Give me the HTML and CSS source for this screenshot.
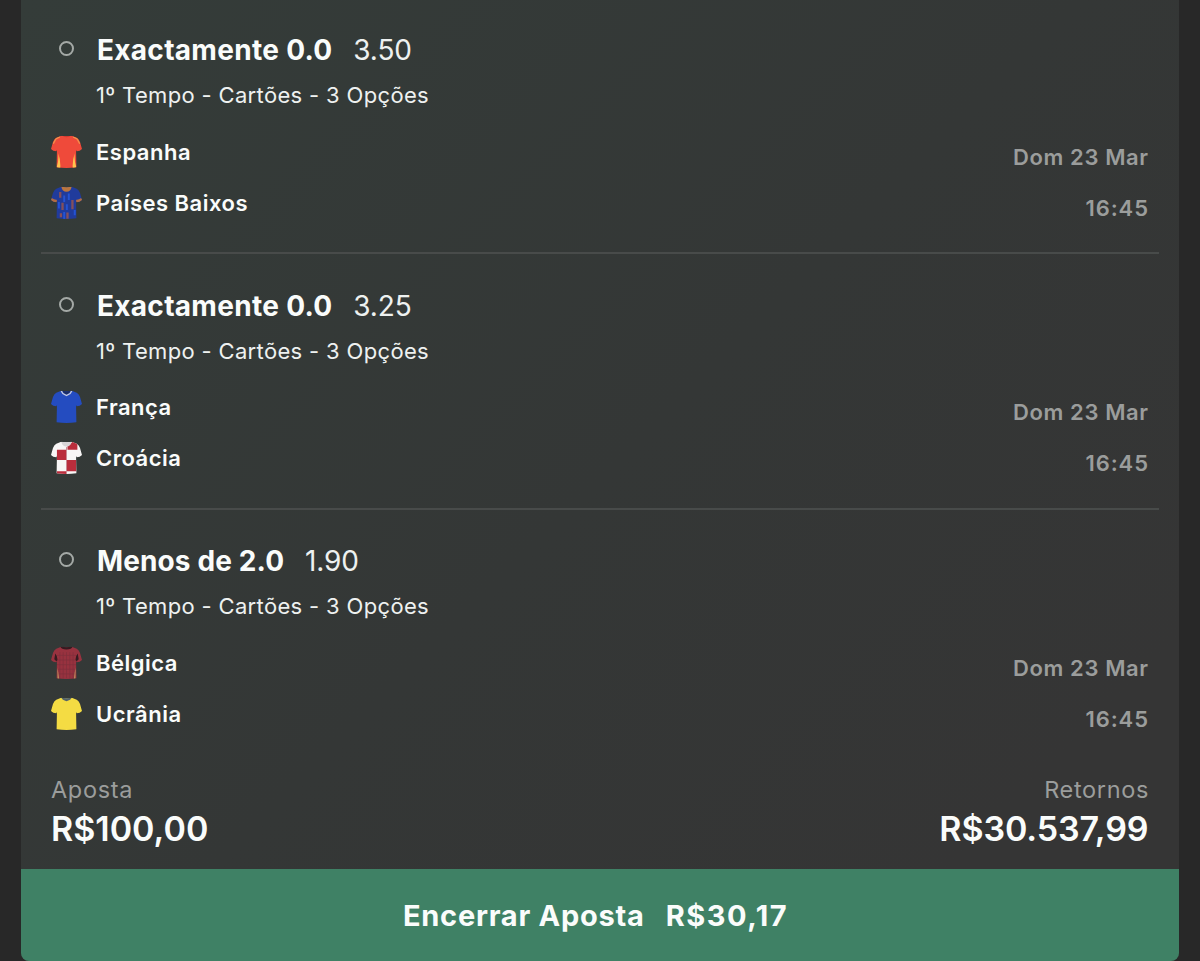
FILE: index.html
```
<!DOCTYPE html>
<html lang="pt">
<head>
<meta charset="utf-8">
<title>Aposta</title>
<link rel="stylesheet" href="styles.css">
</head>
<body>
<svg class="defs" width="0" height="0">
  <defs>
    <path id="shirt" d="M31 2Q47 5 63 2L78 8Q85 12 88 21L94 42Q88 49 78 49L76 45L77 97Q47 102 17 97L18 45L16 49Q6 49 0 42L6 21Q9 12 16 8Z"/>
    <clipPath id="shirt-clip"><use href="#shirt"/></clipPath>
  </defs>
</svg>
<main class="card">
  <div class="legs">
    <section class="leg">
      <div class="pick"><i class="dot"></i><b class="name">Exactamente 0.0</b><span class="odds">3.50</span></div>
      <div class="market">1º Tempo - Cartões - 3 Opções</div>
      <div class="match">
        <div class="teams">
          <div class="team"><svg class="kit" viewBox="0 0 94 102"><g clip-path="url(#shirt-clip)"><path fill="#ef4a3a" d="M0 0h94v102H0z"/><path fill="#d23a30" d="M33 1h28q-14 11-28 0z"/><path stroke="#f3914a" stroke-width="4" fill="none" d="M27 5L15 11L7 26M67 5l12 6l8 15"/><path fill="#ffc34d" d="M17 98Q24 80 22 55Q30 78 28 101zM77 98Q70 80 72 55Q64 78 66 101z"/></g></svg><span>Espanha</span></div>
          <div class="team"><svg class="kit" viewBox="0 0 94 102"><g clip-path="url(#shirt-clip)"><path fill="#203b9c" d="M0 0h94v102H0z"/><path fill="#b87540" d="M31 0h32q-3 17-16 17T31 0z"/><path stroke="#b46c42" stroke-width="8" fill="none" d="M0 39q9 7 18 6M94 39q-9 7-18 6"/><path stroke="#85505a" stroke-width="7" fill="none" d="M28 18v17M35 50v22M65 42v28M30 82v12M50 80v19"/><path stroke="#2453d4" stroke-width="6" fill="none" d="M40 28v20M54 22v20M48 55v17M24 48v20M72 72v16M40 78v22"/></g></svg><span>Países Baixos</span></div>
        </div>
        <div class="when"><span>Dom 23 Mar</span><span class="time">16:45</span></div>
      </div>
    </section>
    <section class="leg">
      <div class="pick"><i class="dot"></i><b class="name">Exactamente 0.0</b><span class="odds">3.25</span></div>
      <div class="market">1º Tempo - Cartões - 3 Opções</div>
      <div class="match">
        <div class="teams">
          <div class="team"><svg class="kit" viewBox="0 0 94 102"><g clip-path="url(#shirt-clip)"><path fill="#244cc0" d="M0 0h94v102H0z"/><path fill="#1b2d68" d="M34 0h26l-5 10l-8 4l-8-4z"/><path stroke="#c5c9df" stroke-width="4" fill="none" d="M31 2l5 8l11 6l11-6l5-8"/></g></svg><span>França</span></div>
          <div class="team"><svg class="kit" viewBox="0 0 94 102"><g clip-path="url(#shirt-clip)"><path fill="#f8f6f6" d="M0 0h94v102H0z"/><path fill="#ba2d3c" d="M50 14L68 0h12v26H50zM18 26h28v31H18zM46 57h31v34H46zM18 91h28v11H18z"/><path fill="#d8d5d7" d="M31 1h32q-3 15-16 15T31 1z"/><path stroke="#c98b94" stroke-width="3" d="M47 18v82"/></g></svg><span>Croácia</span></div>
        </div>
        <div class="when"><span>Dom 23 Mar</span><span class="time">16:45</span></div>
      </div>
    </section>
    <section class="leg">
      <div class="pick"><i class="dot"></i><b class="name name-tight">Menos de 2.0</b><span class="odds">1.90</span></div>
      <div class="market">1º Tempo - Cartões - 3 Opções</div>
      <div class="match">
        <div class="teams">
          <div class="team"><svg class="kit" viewBox="0 0 94 102"><g clip-path="url(#shirt-clip)"><path fill="#98323f" d="M0 0h94v102H0z"/><path fill="#351b20" d="M28 0h38q-3 10-19 10T28 0zM13 22q6 6 7 20l-4 4l-6-6zM81 22q-6 6-7 20l4 4l6-6z"/><path stroke="#7e303b" stroke-width="2" fill="none" d="M27 18v80M37 18v80M47 18v80M57 18v80M67 18v80M18 28h58M18 42h58M18 56h58M18 70h58M18 84h58"/><path fill="#b88a5b" d="M19 65q4 16 6 36h-5zM75 65q-4 16-6 36h5z"/></g></svg><span>Bélgica</span></div>
          <div class="team"><svg class="kit" viewBox="0 0 94 102"><g clip-path="url(#shirt-clip)"><path fill="#f4dc43" d="M0 0h94v102H0z"/><path fill="#53636b" d="M30 0h34l-6 8l-11 4l-11-4z"/></g></svg><span>Ucrânia</span></div>
        </div>
        <div class="when"><span>Dom 23 Mar</span><span class="time">16:45</span></div>
      </div>
    </section>
  </div>
  <div class="totals">
    <div class="total"><span class="label">Aposta</span><span class="amount">R$100,00</span></div>
    <div class="total total-end"><span class="label">Retornos</span><span class="amount">R$30.537,99</span></div>
  </div>
  <button class="cashout"><span>Encerrar Aposta</span><span class="cashout-value">R$30,17</span></button>
</main>
</body>
</html>
```
FILE: styles.css
```
* { box-sizing: border-box; }
body {
  margin: 0;
  height: 961px;
  overflow: hidden;
  background: #282828;
  font-family: Inter, "Liberation Sans", sans-serif;
  color: #fafcfb;
}
.defs { position: absolute; }
.card {
  width: 1158px;
  height: 961px;
  margin-left: 21px;
  overflow: hidden;
  border-radius: 0 0 8px 8px;
  background: linear-gradient(135deg, #343c39 0%, #343736 50%, #353535 85%);
}
.legs { margin-top: -1.5px; padding: 0 20px; }
.leg {
  height: 255.5px;
  padding: 33.5px 11px 0 10px;
  border-bottom: 2px solid #484b4a;
}
.leg:last-child { border-bottom-color: transparent; }
.pick { display: flex; align-items: center; height: 36px; font-size: 28px; white-space: nowrap; }
.dot {
  width: 15px;
  height: 15px;
  margin: 0 23px 3px 8px;
  border: 2px solid #a4a9a6;
  border-radius: 50%;
}
.name { font-weight: 700; letter-spacing: 0.3px; }
.name-tight { letter-spacing: 0.12px; }
.odds { margin-left: 20.8px; font-weight: 400; letter-spacing: -0.1px; color: #eef1f0; }
.market { margin: 13px 0 17px 45px; line-height: 28px; font-size: 22px; letter-spacing: 0.34px; color: #eef1f0; }
.match { display: flex; justify-content: space-between; }
.team { display: flex; align-items: center; gap: 14px; height: 51.3px; font-size: 22px; font-weight: 600; letter-spacing: 0.5px; }
.kit { width: 31px; height: 34px; }
.when { display: flex; flex-direction: column; align-items: flex-end; padding-top: 5.8px; }
.when span { line-height: 51px; font-size: 22px; font-weight: 600; letter-spacing: 0.6px; margin-right: -0.6px; color: #9b9d9c; }
.when .time { letter-spacing: 0.9px; margin-right: -0.9px; }
.totals { display: flex; justify-content: space-between; height: 104px; padding: 11px 31px 0 30px; }
.total { display: flex; flex-direction: column; gap: 5px; }
.total-end { align-items: flex-end; }
.label { line-height: 28px; font-size: 23.5px; letter-spacing: 0.65px; color: #9b9d9c; }
.total-end .label { margin-right: -1px; }
.amount { line-height: 40px; font-size: 34px; font-weight: 600; }
.total-end .amount { letter-spacing: -0.1px; margin-right: -0.5px; }
.cashout {
  display: flex;
  justify-content: center;
  align-items: center;
  gap: 21px;
  width: 100%;
  height: 93px;
  padding: 0 9px 0 0;
  border: 0;
  background: #3f8165;
  color: #fafcfb;
  font: 700 29px Inter, "Liberation Sans", sans-serif;
  letter-spacing: 0.75px;
}
.cashout-value { letter-spacing: 1.5px; }
```
